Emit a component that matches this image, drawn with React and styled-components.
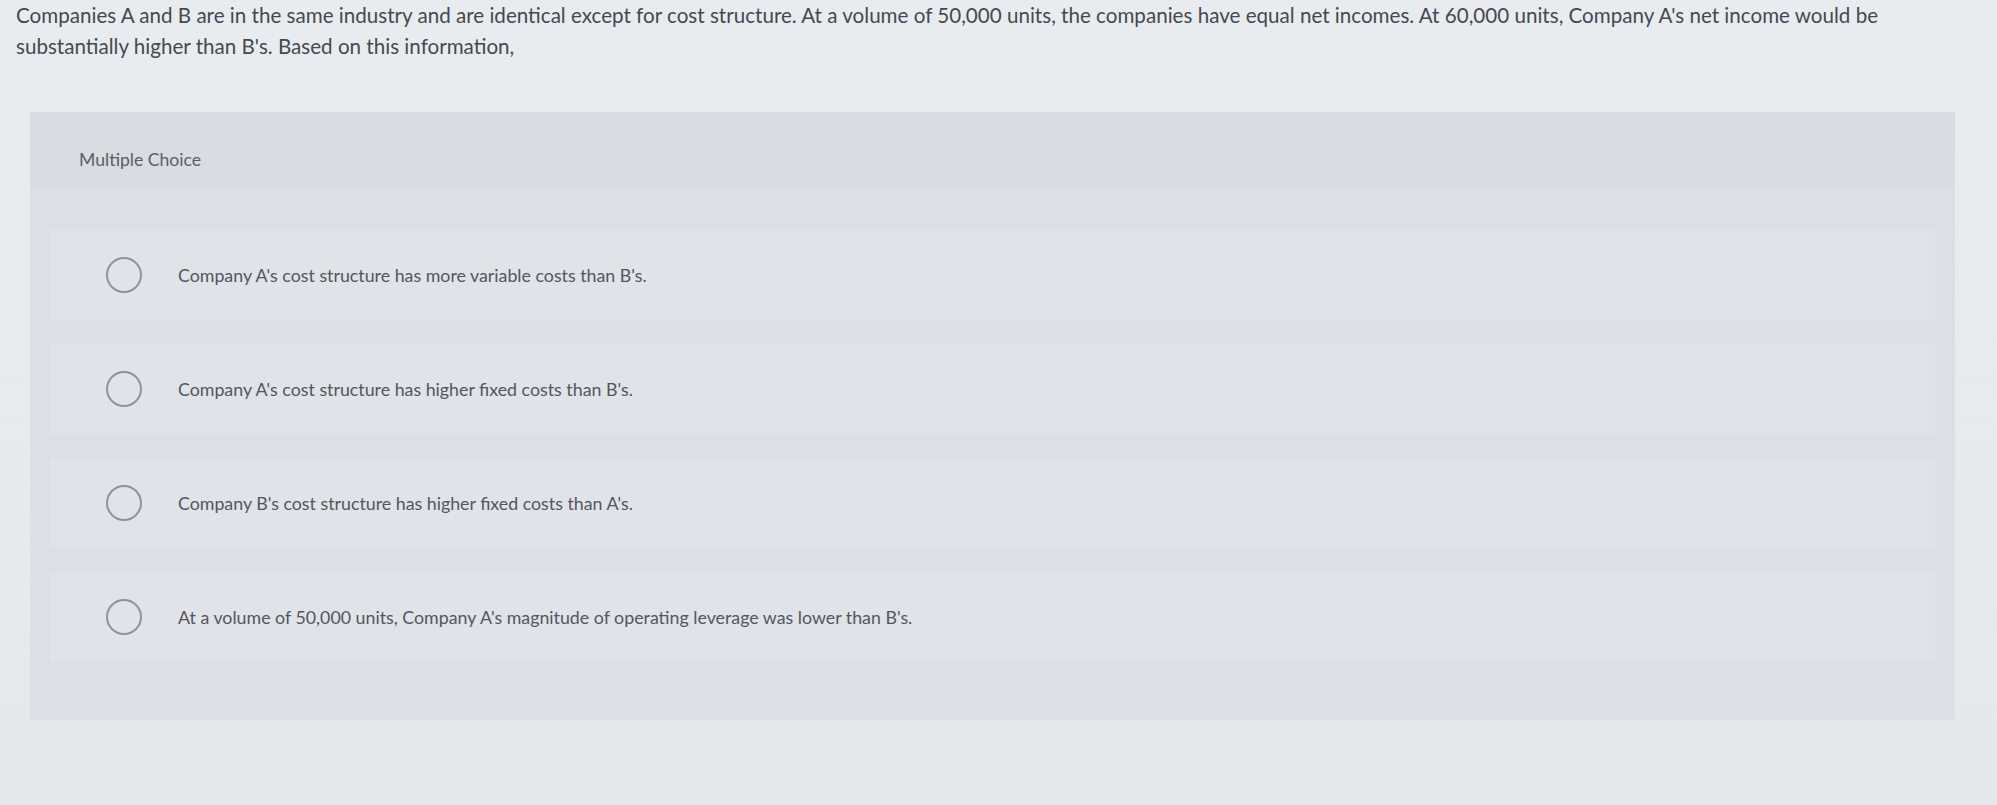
import React from "react"
import styled, { createGlobalStyle } from "styled-components"

const GlobalStyle = createGlobalStyle`
  html, body {
    margin: 0;
    padding: 0;
    background: #e8ebee;
  }
  body {
    font-family: Lato, "Open Sans", "Liberation Sans", sans-serif;
    width: 1997px;
    height: 805px;
    overflow: hidden;
  }
`

const Page = styled.main`
  width: 100%;
  height: 805px;
  background: linear-gradient(180deg, #e9ecef 0%, #e6e9ec 100%);
`

const Question = styled.p`
  margin: 0;
  padding: 0 16px;
  font-size: 20.6px;
  line-height: 31px;
  color: #444951;
`

const Panel = styled.section`
  margin: 50px 42px 0 30px;
  background: #dcdfe3;
  padding-bottom: 58px;
`

const PanelHeader = styled.header`
  height: 75px;
  padding: 37px 0 0 49px;
  box-sizing: border-box;
  font-size: 17.6px;
  line-height: 22px;
  color: #5a5f67;
  background: #d9dce0;
`

const OptionList = styled.ul`
  list-style: none;
  margin: 0 20px;
  padding: 43px 0 0;
  display: flex;
  flex-direction: column;
  gap: 24px;
`

const Option = styled.li`
  height: 90px;
  display: flex;
  align-items: center;
  gap: 36px;
  padding-left: 56px;
  background: #e0e3e7;
`

const Radio = styled.span`
  width: 36px;
  height: 36px;
  box-sizing: border-box;
  border-radius: 50%;
  border: 2px solid #8f939a;
  flex: none;
`

const OptionText = styled.span`
  font-size: 17.8px;
  color: #52575f;
`

const options = [
  "Company A's cost structure has more variable costs than B's.",
  "Company A's cost structure has higher fixed costs than B's.",
  "Company B's cost structure has higher fixed costs than A's.",
  "At a volume of 50,000 units, Company A's magnitude of operating leverage was lower than B's.",
]

export default function App() {
  return (
    <Page>
      <GlobalStyle />
      <Question>
        Companies A and B are in the same industry and are identical except for
        cost structure. At a volume of 50,000 units, the companies have equal
        net incomes. At 60,000 units, Company A's net income would be
        substantially higher than B's. Based on this information,
      </Question>
      <Panel>
        <PanelHeader>Multiple Choice</PanelHeader>
        <OptionList>
          {options.map((text) => (
            <Option key={text}>
              <Radio />
              <OptionText>{text}</OptionText>
            </Option>
          ))}
        </OptionList>
      </Panel>
    </Page>
  )
}
